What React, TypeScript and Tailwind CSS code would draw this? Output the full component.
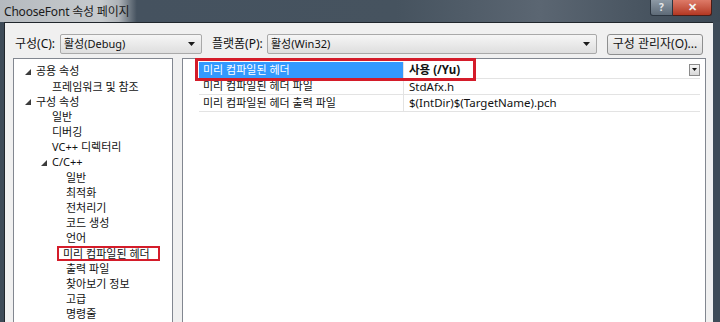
import React from "react";

const uiFont = {
  fontFamily: '"Segoe UI", "Noto Sans", "Noto Sans CJK KR", sans-serif',
};

type TreeItem = { label: string; level: number; open?: boolean; marked?: boolean };

const treeItems: TreeItem[] = [
  { label: "공용 속성", level: 0, open: true },
  { label: "프레임워크 및 참조", level: 1 },
  { label: "구성 속성", level: 0, open: true },
  { label: "일반", level: 1 },
  { label: "디버깅", level: 1 },
  { label: "VC++ 디렉터리", level: 1 },
  { label: "C/C++", level: 1, open: true },
  { label: "일반", level: 2 },
  { label: "최적화", level: 2 },
  { label: "전처리기", level: 2 },
  { label: "코드 생성", level: 2 },
  { label: "언어", level: 2 },
  { label: "미리 컴파일된 헤더", level: 2, marked: true },
  { label: "출력 파일", level: 2 },
  { label: "찾아보기 정보", level: 2 },
  { label: "고급", level: 2 },
  { label: "명령줄", level: 2 },
];

const props = [
  { name: "미리 컴파일된 헤더", value: "사용 (/Yu)", selected: true },
  { name: "미리 컴파일된 헤더 파일", value: "StdAfx.h" },
  { name: "미리 컴파일된 헤더 출력 파일", value: "$(IntDir)$(TargetName).pch" },
];

const Arrow = () => (
  <svg width="6" height="6" viewBox="0 0 6 6" className="mr-[5px]">
    <polygon points="6,0 6,6 0,6" fill="#3c3c3c" />
  </svg>
);

const Caret = () => (
  <svg width="7" height="4" viewBox="0 0 7 4">
    <polygon points="0,0 7,0 3.5,4" fill="#1a1a1a" />
  </svg>
);

const Combo = ({ text, width }: { text: string; width: string }) => (
  <div
    className={`${width} h-[20px] flex items-center justify-between pl-[3px] pr-[6px] border border-[#a9a9a9] rounded-[2px] bg-gradient-to-b from-[#f6f6f6] to-[#dedede] text-[#111]`}>
    <span>{text}</span>
    <Caret />
  </div>
);

const App: React.FC = () => {
  return (
    <div
      className="w-[720px] h-[322px] overflow-hidden flex flex-col bg-[#3e4b58] text-[11px]"
      style={uiFont}>
      {/* Title bar */}
      <div className="h-[22px] flex items-start bg-[linear-gradient(90deg,#b5babf_0%,#c6cacd_14%,#aeb3b8_16.5%,#45525f_19%,#46535f_55%,#5b6672_75%,#4a5662_88%,#3c4955_100%)]">
        <span className="pl-[4px] pt-[3px] text-[12px] text-[#1b1b1b] tracking-[-0.2px]">
          ChooseFont 속성 페이지
        </span>
        <div className="ml-auto mr-[8px] flex h-[16px]">
          <div className="w-[23px] h-full flex items-center justify-center rounded-bl-[3px] border border-t-0 border-[#2b3540] bg-gradient-to-b from-[#8d99a5] to-[#5e6b78] text-[10px] font-bold text-[#e8e8e8]">
            ?
          </div>
          <div className="w-[39px] h-full flex items-center justify-center rounded-br-[3px] border border-t-0 border-l-0 border-[#4a1d17] bg-gradient-to-b from-[#dd7a68] to-[#b33722] text-[11px] font-bold text-[#f3f3f3]">
            ✕
          </div>
        </div>
      </div>

      {/* Window body */}
      <div className="flex-1 ml-[4px] mr-[7px] border-t border-l border-[#20262c] bg-[#f0f0f0] flex flex-col min-h-0">
        {/* Configuration row */}
        <div className="flex items-center h-[20px] mt-[11px] pl-[9px] pr-[6px] text-[#111]">
          <span className="w-[46px] pl-[1px] text-[12px]">구성(C):</span>
          <Combo text="활성(Debug)" width="w-[142px]" />
          <span className="ml-[10px] w-[55px] text-[12px]">플랫폼(P):</span>
          <Combo text="활성(Win32)" width="w-[330px]" />
          <div className="ml-[10px] w-[96px] h-[21px] flex items-center justify-center border border-[#8e8f8f] rounded-[3px] bg-gradient-to-b from-[#f4f4f4] to-[#dcdcdc] text-[12px]">
            구성 관리자(O)...
          </div>
        </div>

        {/* Main area */}
        <div className="flex flex-1 min-h-0 mt-[4px] pl-[8px] pr-[7px] gap-[9px]">
          {/* Tree */}
          <div className="w-[160px] h-[280px] shrink-0 bg-white border border-[#828790] pt-[5px] text-[#111] text-[11px]">
            {treeItems.map((item, i) => (
              <div
                key={i}
                className="h-[15.2px] flex items-center"
                style={{ paddingLeft: item.level === 0 ? 11 : item.level === 1 ? (item.open ? 27 : 38) : 52 }}>
                {item.open && <Arrow />}
                <span
                  className={
                    item.marked
                      ? "-ml-[9px] inline-flex items-center h-[15px] pl-[4px] pr-[8px] border-2 border-[#d41c2a]"
                      : ""
                  }>
                  {item.label}
                </span>
              </div>
            ))}
          </div>

          {/* Property grid */}
          <div className="relative flex-1 h-[280px] bg-white border border-[#828790] pt-[3px] pl-[16px] pr-[5px] text-[#111]">
            {props.map((p, i) => (
              <div key={i} className="h-[16.5px] flex border-b border-[#e3e3e3]">
                <div
                  className={`w-[205px] pl-[4px] flex items-center border-r border-[#e3e3e3] ${
                    p.selected ? "bg-[#3399ff] text-white" : ""
                  }`}>
                  {p.name}
                </div>
                <div
                  className={`flex-1 pl-[5px] flex items-center justify-between ${
                    p.selected ? "font-bold" : ""
                  }`}>
                  <span className="text-[11.5px]">{p.value}</span>
                  {p.selected && (
                    <div className="w-[11px] h-[12px] flex items-center justify-center border border-[#8a8a8a] bg-gradient-to-b from-[#f6f6f6] to-[#d8d8d8]">
                      <svg width="5" height="3" viewBox="0 0 5 3">
                        <polygon points="0,0 5,0 2.5,3" fill="#111" />
                      </svg>
                    </div>
                  )}
                </div>
              </div>
            ))}
            {/* annotation around selected property */}
            <div className="absolute left-[12px] top-[-1px] w-[281px] h-[23px] border-[3px] border-[#d41c2a]" />
          </div>
        </div>
      </div>
    </div>
  );
};

export default App;
